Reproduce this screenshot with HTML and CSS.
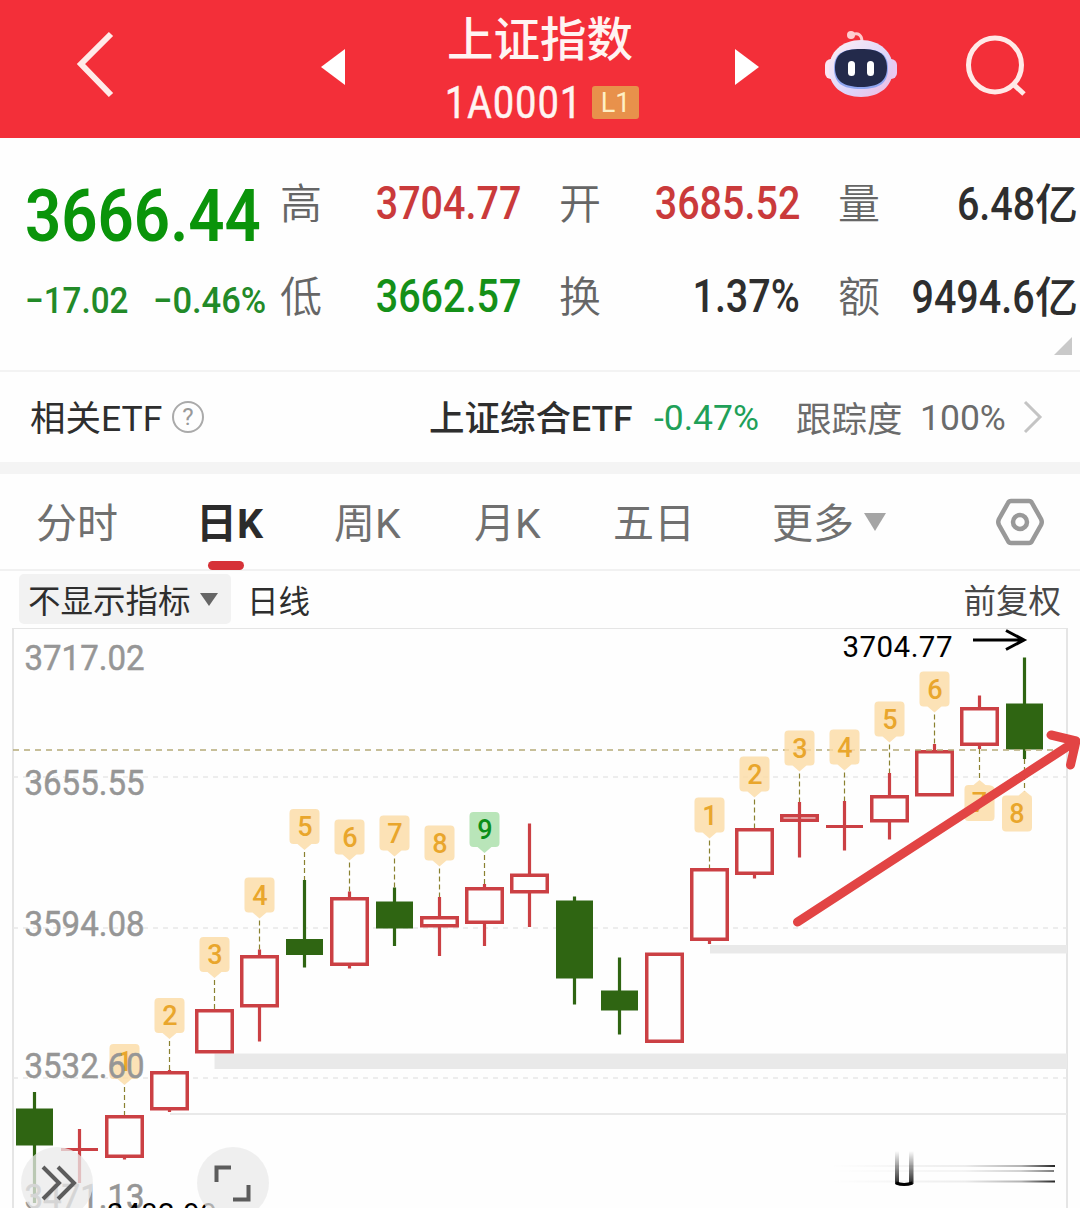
FILE: index.html
```html
<!DOCTYPE html>
<html lang="zh-CN">
<head>
  <meta charset="UTF-8" />
  <meta name="viewport" content="width=device-width, initial-scale=1.0">
  <title>上证指数 1A0001</title>
  <link rel="stylesheet" href="styles.css">
</head>
<body>
<header>
  <svg class="back" width="44" height="72" viewBox="0 0 44 72"><path d="M40 4L10 34L40 65" /></svg>
  <svg class="prev" width="24" height="36" viewBox="0 0 24 36"><path d="M0 18L24 0V36Z" /></svg>
  <div class="title">
    <h1>上证指数</h1>
    <div class="code"><span class="num">1A0001</span><b>L1</b></div>
  </div>
  <svg class="next" width="24" height="36" viewBox="0 0 24 36"><path d="M24 18L0 0V36Z" /></svg>
  <svg class="robot" width="72" height="70" viewBox="0 0 72 70">
    <defs>
      <linearGradient id="shell" x1="0" y1="0" x2="1" y2="1">
        <stop offset="0" stop-color="#fff0f4" />
        <stop offset="0.6" stop-color="#dcd5fa" />
        <stop offset="1" stop-color="#f3b9dd" />
      </linearGradient>
    </defs>
    <path d="M27 5C33 2 37 5 37 12" fill="none" stroke="#ffc9cc" stroke-width="3" />
    <circle cx="26" cy="5" r="4" fill="#ffcdd0" />
    <rect x="0" y="29" width="12" height="20" rx="6" fill="#fbe6f2" />
    <rect x="60" y="29" width="12" height="20" rx="6" fill="#e9c9f0" />
    <path d="M36 10C55 10 68 22 68 39C68 56 55 67 36 67C17 67 4 56 4 39C4 22 17 10 36 10Z" fill="url(#shell)" />
    <path d="M36 19C55 19 63 24 63 38C63 53 55 59 36 59C17 59 9 53 9 38C9 24 17 19 36 19Z" fill="#8fa5f0" />
    <path d="M36 19C54 19 62 24 62 38C62 51 53 57 36 57C19 57 10 51 10 38C10 24 18 19 36 19Z" fill="#232a4b" />
    <rect x="23" y="31" width="7" height="15" rx="3.5" fill="#fff" />
    <rect x="42" y="31" width="7" height="15" rx="3.5" fill="#fff" />
  </svg>
  <svg class="search" width="62" height="64" viewBox="0 0 62 64"><ellipse cx="30" cy="30" rx="26.500" ry="27" /><path d="M48 49L59 59" /></svg>
</header>

<section class="quote">
  <div class="price">
    <div class="last"><span class="num">3666.44</span></div>
    <div class="change"><span class="num">−17.02</span><span class="num">−0.46%</span></div>
  </div>
  <dl>
    <div><dt>高</dt><dd class="up"><span class="num">3704.77</span></dd></div>
    <div><dt>开</dt><dd class="up"><span class="num">3685.52</span></dd></div>
    <div><dt>量</dt><dd><span class="num">6.48</span>亿</dd></div>
    <div><dt>低</dt><dd class="down"><span class="num">3662.57</span></dd></div>
    <div><dt>换</dt><dd><span class="num">1.37%</span></dd></div>
    <div><dt>额</dt><dd><span class="num">9494.6</span>亿</dd></div>
  </dl>
  <i class="corner"></i>
</section>

<section class="etf">
  <span class="etf-label">相关ETF</span>
  <span class="help">?</span>
  <strong>上证综合ETF</strong>
  <span class="etf-change">-0.47%</span>
  <span class="track">跟踪度</span>
  <span class="track-value">100%</span>
  <svg width="22" height="36" viewBox="0 0 22 36"><path d="M4 3L19 18L4 33" /></svg>
</section>

<nav>
  <span>分时</span>
  <span class="active">日K</span>
  <span>周K</span>
  <span>月K</span>
  <span>五日</span>
  <span>更多<i class="caret"></i></span>
  <svg width="50" height="50" viewBox="0 0 50 50">
    <path d="M16 4H34Q36 4 37 6L46 22Q47.500 25 46 28L37 44Q36 46 34 46H16Q14 46 13 44L4 28Q2.500 25 4 22L13 6Q14 4 16 4Z" />
    <circle cx="25" cy="25" r="7" />
  </svg>
</nav>

<div class="options">
  <span class="indicator">不显示指标<i class="caret"></i></span>
  <span class="period">日线</span>
  <span class="adjust">前复权</span>
</div>

<main>
  <svg id="chart" width="1080" height="580" viewBox="0 628 1080 580"></svg>
  <button class="tool forward">
    <svg width="36" height="38" viewBox="0 0 36 38"><path d="M2 3L18 19L2 35M17 3L33 19L17 35" /></svg>
  </button>
  <button class="tool expand">
    <svg width="38" height="38" viewBox="0 0 38 38"><path d="M3.500 18V3.500H18M35.500 21V35.500H20" /></svg>
  </button>
</main>
<script src="chart.js"></script>
</body>
</html>
```

FILE: styles.css
```css
* {
  box-sizing: border-box;
}
body {
  margin: 0;
  width: 1080px;
  height: 1208px;
  overflow: hidden;
  background: #fefefe;
  color: #2e2e2e;
  font-family: Roboto, "Noto Sans CJK SC", sans-serif;
}
svg {
  display: block;
  flex: none;
}
.num {
  display: inline-block;
  transform: scaleX(0.84);
  transform-origin: right center;
}
header {
  display: flex;
  height: 138px;
  background: #f32f39;
}
.back {
  margin: 30px 0 0 71px;
  fill: none;
  stroke: #ffebe9;
  stroke-width: 6;
}
.prev {
  margin: 49px 0 0 206px;
  fill: #fff;
}
.title {
  width: 390px;
  color: #fff4f2;
}
.title h1 {
  margin: 10px 0 0;
  font-size: 46.5px;
  font-weight: 500;
  line-height: 60px;
  text-align: center;
}
.code {
  display: flex;
  height: 68px;
  line-height: 67px;
  font-size: 43.5px;
  padding-left: 100px;
}
.code .num {
  width: 131px;
  letter-spacing: 1.5px;
  transform: scaleX(0.86);
  transform-origin: left center;
  -webkit-text-stroke: 0.6px #fff4f2;
}
.code b {
  margin: 16px 0 0 16px;
  width: 47px;
  height: 33px;
  border-radius: 3px;
  background: #e8914b;
  color: #fff0c4;
  font-size: 27px;
  font-weight: 400;
  line-height: 34px;
  text-align: center;
}
.next {
  margin: 49px 0 0;
  fill: #fff;
}
.robot {
  margin: 30px 0 0 66px;
}
.search {
  margin: 35px 0 0 68px;
  fill: none;
  stroke: #ffe9e7;
  stroke-width: 5;
}
.quote {
  display: flex;
  position: relative;
  height: 234px;
  border-bottom: 2px solid #f3f3f3;
}
.price {
  width: 280px;
  padding-left: 25px;
  color: #0a940a;
  white-space: nowrap;
}
.price .num {
  transform-origin: left center;
}
.last {
  height: 132px;
  line-height: 156px;
  font-size: 73px;
  font-weight: 600;
}
.last .num {
  transform: scaleX(0.87);
}
.change {
  display: flex;
  font-size: 36.5px;
  font-weight: 500;
  line-height: 62px;
  color: #228a28;
}
.change .num {
  width: 129px;
  transform: scaleX(0.91);
}
.change .num:last-child {
  transform: scaleX(0.945);
}
dl {
  display: grid;
  grid-template-columns: 279px 279px 240px;
  grid-template-rows: 93px 93px;
  margin: 18px 0 0;
}
dl div {
  display: flex;
  justify-content: space-between;
  align-items: center;
  padding-right: 38px;
  white-space: nowrap;
}
dl div:nth-child(3n) {
  padding-right: 0;
}
dt {
  font-size: 42px;
  font-weight: 350;
  line-height: 60px;
  padding-top: 4px;
  color: #666;
}
dd {
  margin: 0;
  font-size: 47px;
  font-weight: 500;
}
dl div:nth-child(3n) dd {
  font-size: 43px;
  padding-bottom: 4px;
}
dl div:nth-child(3n) .num {
  font-size: 47px;
}
.up {
  color: #ca3a3b;
}
.down {
  color: #149018;
}
.corner {
  position: absolute;
  right: 8px;
  bottom: 15px;
  border-left: 18px solid transparent;
  border-bottom: 18px solid #c9c9c9;
}
.etf {
  display: flex;
  align-items: center;
  height: 90px;
  padding-left: 30px;
  font-size: 35.5px;
  white-space: nowrap;
}
.etf-label {
  width: 142px;
  padding-bottom: 3px;
}
.help {
  width: 32px;
  height: 32px;
  border: 2px solid #aaa;
  border-radius: 50%;
  color: #999;
  font-size: 24px;
  line-height: 29px;
  text-align: center;
}
.etf strong {
  width: 225px;
  margin-left: 225px;
  padding-bottom: 3px;
  font-weight: 500;
}
.etf-change {
  width: 142px;
  padding-top: 2px;
  color: #20a058;
}
.track {
  width: 124px;
  padding-bottom: 2px;
  color: #6b6b6b;
}
.track-value {
  width: 101px;
  padding-top: 2px;
  color: #6b6b6b;
}
.etf path {
  fill: none;
  stroke: #c4c4c4;
  stroke-width: 3;
}
nav {
  display: grid;
  grid-template-columns: 160px 138px 140px 139px 159px 223px 50px;
  align-items: center;
  height: 109px;
  padding-left: 36px;
  border-top: 12px solid #f4f4f4;
  border-bottom: 2px solid #f1f1f1;
  font-size: 41px;
  color: #707070;
}
nav span {
  position: relative;
  padding-top: 4px;
  line-height: 60px;
}
nav .active {
  color: #2b2b2b;
  font-weight: 700;
}
.active::after {
  content: "";
  position: absolute;
  left: 12px;
  bottom: -16px;
  width: 36px;
  height: 9px;
  border-radius: 5px;
  background: #d63238;
}
.caret {
  display: inline-block;
  border: 11px solid transparent;
  border-top: 18px solid #a5a5a5;
  border-bottom: 0;
  margin-left: 10px;
  vertical-align: 7px;
}
nav svg {
  fill: none;
  stroke: #999;
  stroke-width: 4.5;
}
.options {
  display: flex;
  align-items: center;
  height: 57px;
  padding: 0 19px;
  font-size: 32.5px;
}
.indicator {
  width: 212px;
  height: 50px;
  padding-left: 9px;
  margin: -2px 16px 0 0;
  border-radius: 5px;
  background: #f2f2f2;
  line-height: 56px;
}
.indicator .caret {
  border-width: 13px 9px 0;
  border-top-color: #666;
  margin-left: 9px;
}
.period,
.adjust {
  padding-bottom: 2px;
}
.period {
  font-size: 31.5px;
}
.adjust {
  margin-left: auto;
  color: #484848;
}
main {
  position: relative;
  height: 580px;
}
#chart {
  font-family: Roboto, sans-serif;
}
.frame {
  fill: none;
  stroke: #e5e5e5;
  stroke-width: 2;
}
.grid {
  stroke: #e8e8e8;
  stroke-width: 1.5;
  stroke-dasharray: 5 5;
}
.current {
  stroke: #b5ab78;
  stroke-width: 1.6;
  stroke-dasharray: 6 5;
}
.zone {
  fill: #e9e9e9;
}
.rise {
  fill: #fefefe;
  stroke: #cb4044;
  stroke-width: 3.5;
}
.fall {
  fill: #2f6512;
  stroke: #2f6512;
}
.wick {
  stroke-width: 3.2;
}
.body.fall {
  stroke: none;
}
.axis {
  fill: #969696;
  font-size: 35px;
  stroke: #969696;
  stroke-width: 0.5;
}
.extreme {
  fill: #000;
  font-size: 29.5px;
}
.leader {
  stroke: #8a8130;
  stroke-width: 1.2;
  stroke-dasharray: 5 3;
}
.tag {
  fill: #fbdca6;
  fill-opacity: 0.82;
}
.tag-text {
  fill: #e9a62c;
  font-size: 27px;
  font-weight: 500;
  text-anchor: middle;
}
.tag.done {
  fill: #a9dfaa;
}
.tag-text.done {
  fill: #0b8f17;
}
.pointer {
  fill: none;
  stroke: #000;
  stroke-width: 3;
}
.trend {
  fill: none;
  stroke: #e24444;
  stroke-width: 9;
  stroke-linecap: round;
  stroke-linejoin: round;
}
.tool {
  position: absolute;
  top: 519px;
  width: 72px;
  height: 72px;
  padding: 17px 20px;
  border: 0;
  border-radius: 50%;
  background: rgba(234, 234, 234, 0.75);
}
.tool path {
  fill: none;
  stroke: #5c5c5c;
  stroke-width: 4;
}
.forward {
  left: 21px;
}
.expand {
  left: 197px;
  padding-left: 16px;
}
```

FILE: chart.js
```js
// y positions: [high, body top, body bottom, low, rising, tag, tag top]
const candles = [
  [1092, 1108.5, 1145.5, 1203, 0],
  [1129, 1149.5, 1149.5, 1183, 1],
  [1115, 1115, 1158, 1159.5, 1, 1, 1044],
  [1070, 1071, 1110.5, 1112, 1, 2, 998],
  [1009, 1009, 1053.5, 1053, 1, 3, 937],
  [949.5, 955, 1007.5, 1041.5, 1, 4, 877.5],
  [880, 939, 955, 967.5, 0, 5, 809],
  [891.5, 897, 966, 968.5, 1, 6, 819.5],
  [887.5, 901.5, 928.5, 946, 0, 7, 815.5],
  [897, 916, 927.5, 956, 1, 8, 825.5],
  [884, 887, 924, 946, 1, 9, 812],
  [823.5, 873.5, 893.5, 927, 1],
  [896.5, 900.5, 978.5, 1004.5, 0],
  [957.5, 990.5, 1010.5, 1034.5, 0],
  [953, 952.5, 1043, 1043, 1],
  [868, 868, 941, 944, 1, 1, 797.5],
  [828, 828, 875, 878.5, 1, 2, 756.5],
  [802, 814, 822, 857.5, 1, 3, 730.5],
  [801, 826.5, 826.5, 850.5, 1, 4, 729.5],
  [773, 795, 822.5, 839.5, 1, 5, 701.5],
  [744, 750, 796.5, 796, 1, 6, 671.5],
  [695.5, 707, 746, 749, 1],
  [657.5, 703.5, 749.5, 759, 0]
];

let out = `
  <defs>
    <linearGradient id="fadeX"><stop offset="0" stop-color="#000" stop-opacity="0"/><stop offset="0.6" stop-color="#000" stop-opacity="0.07"/><stop offset="0.85" stop-color="#000" stop-opacity="0.3"/><stop offset="1" stop-color="#000" stop-opacity="0.85"/></linearGradient>
    <linearGradient id="fadeY" x2="0" y2="1"><stop offset="0" stop-color="#000" stop-opacity="0"/><stop offset="1" stop-color="#000" stop-opacity="0.85"/></linearGradient>
  </defs>
  <rect class="frame" x="13" y="628" width="1054" height="600"/>
  <path class="grid" d="M13 777H1067M13 928H1067M13 1078H1067"/>
  <rect class="zone" x="710" y="945" width="357" height="8.500"/>
  <rect class="zone" x="214.500" y="1053.500" width="852.500" height="15.500"/>
  <rect class="zone" x="170" y="1113" width="897" height="2"/>`;

candles.forEach(([high, top, bottom, low, rising], i) => {
  const x = 34.5 + i * 45;
  const cls = rising ? "rise" : "fall";
  out += `<path class="wick ${cls}" d="M${x} ${high}V${low}"/>`;
  if (top === bottom) {
    out += `<path class="wick ${cls}" d="M${x - 18.5} ${top}H${x + 18.5}"/>`;
  } else if (rising) {
    const fill = bottom - top < 10 ? ' fill-opacity="0"' : "";
    out += `<rect class="body rise"${fill} x="${x - 17.75}" y="${top + 1.75}" width="35.5" height="${bottom - top - 3.5}"/>`;
  } else {
    out += `<rect class="body fall" x="${x - 18.5}" y="${top}" width="37" height="${bottom - top}"/>`;
  }
});

out += `<path class="current" d="M13 750H1067"/>`;

candles.forEach(([high, , , , , n, y], i) => {
  if (!n) return;
  const x = 34.5 + i * 45;
  const done = n === 9 ? " done" : "";
  out += `<path class="leader" d="M${x} ${y + 43}V${high}"/>
    <path class="tag${done}" d="M${x - 11} ${y}h22q4 0 4 4v27q0 4 -4 4h-4l-7 6l-7 -6h-4q-4 0 -4 -4v-27q0 -4 4 -4z"/>
    <text class="tag-text${done}" x="${x + 0.5}" y="${y + 27}">${n}</text>`;
});

// tags hanging under the candles
[[979.5, 979.5, 749, 785, 7], [1017, 1024.5, 759, 795.5, 8]].forEach(([x, tip, from, y, n]) => {
  out += `<path class="leader" d="M${tip} ${from}V${y - 4}"/>
    <path class="tag" d="M${x - 11} ${y}H${tip - 6}L${tip} ${y - 5}L${Math.min(tip + 6, x + 14)} ${y}Q${x + 15} ${y} ${x + 15} ${y + 4}v28q0 4 -4 4h-22q-4 0 -4 -4v-28q0 -4 4 -4z"/>
    <text class="tag-text" x="${x}" y="${y + 27}">${n}</text>`;
});

[["3717.02", 670], ["3655.55", 794.5], ["3594.08", 935.5], ["3532.60", 1077.5], ["3471.13", 1209]].forEach(([label, y]) => {
  out += `<text class="axis" x="24.5" y="${y}" textLength="120" lengthAdjust="spacingAndGlyphs">${label}</text>`;
});

out += `
  <text class="extreme" x="842.500" y="657" textLength="110">3704.77</text>
  <text class="extreme" x="107" y="1224" textLength="110">3482.99</text>
  <path class="pointer" d="M973 640H1024M1006 630.500L1024 640L1006 649.500"/>
  <path class="trend" d="M797.500 922L1076 741M1051 735L1076 741L1070.500 765"/>
  <rect fill="url(#fadeX)" x="830" y="1165" width="225" height="2"/>
  <rect fill="url(#fadeX)" x="830" y="1170" width="224" height="2" opacity="0.6"/>
  <rect fill="url(#fadeX)" x="830" y="1180.500" width="225" height="2"/>
  <rect fill="url(#fadeY)" x="895" y="1151" width="4" height="33"/>
  <rect fill="url(#fadeY)" x="909" y="1151" width="4.500" height="33"/>
  <path class="pointer" d="M896 1183Q904 1186 912.500 1183"/>`;

document.getElementById("chart").innerHTML = out;
```
